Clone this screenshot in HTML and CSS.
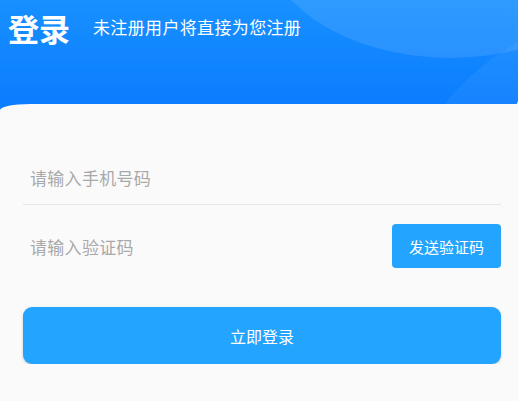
FILE: index.html
```html
<!DOCTYPE html>
<html lang="zh-CN">
<head>
    <meta charset="UTF-8">
    <meta name="viewport" content="width=device-width, initial-scale=1.0">
    <title>登录</title>
    <link rel="stylesheet" href="styles.css">
</head>
<body>
    <div class="header">
        <div class="bubble bubble-top"></div>
        <div class="bubble bubble-bottom"></div>
        <div class="title-row">
            <h1>登录</h1>
            <span class="subtitle">未注册用户将直接为您注册</span>
        </div>
    </div>

    <div class="panel">
        <div class="field field-phone">
            <input type="text" placeholder="请输入手机号码">
        </div>
        <div class="field field-code">
            <input type="text" placeholder="请输入验证码">
            <button class="code-btn">发送验证码</button>
        </div>
        <button class="login-btn">立即登录</button>
    </div>
</body>
</html>
```

FILE: styles.css
```css
body {
    margin: 0;
    background-color: #fafafa;
    font-family: "Noto Sans CJK SC", "Noto Sans", sans-serif;
}
.header {
    position: relative;
    height: 110px;
    overflow: hidden;
    background: linear-gradient(180deg, #1890ff 0%, #0a7cff 100%);
    border-bottom-right-radius: 16px 10px;
}
.bubble {
    position: absolute;
    border-radius: 50%;
}
.bubble-top {
    left: 260px;
    top: -198px;
    width: 380px;
    height: 256px;
    background: rgba(255, 255, 255, 0.1);
}
.bubble-bottom {
    left: 390px;
    top: 10px;
    width: 500px;
    height: 500px;
    background: rgba(255, 255, 255, 0.05);
}
.title-row {
    position: relative;
    display: flex;
    align-items: center;
    padding: 7px 0 0 8px;
}
h1 {
    margin: 0;
    font-size: 31px;
    font-weight: bold;
    color: #fff;
    line-height: 42px;
}
.subtitle {
    margin-left: 23px;
    margin-top: -3px;
    font-size: 17px;
    letter-spacing: 0.35px;
    color: #fff;
}
.panel {
    position: relative;
    margin-top: -6px;
    padding: 46px 17px 0 23px;
    background-color: #fafafa;
    border-top-left-radius: 30px 6px;
}
.field {
    display: flex;
    align-items: center;
}
.field input {
    flex: 1;
    border: none;
    outline: none;
    background: transparent;
    padding: 0 0 0 7px;
    font-family: inherit;
    font-size: 17px;
    letter-spacing: 0.3px;
    color: #333;
}
.field input::placeholder {
    color: #a9a9a9;
}
.field-phone {
    height: 54px;
    border-bottom: 1px solid #e6e6e6;
}
.field-code {
    height: 82px;
}
.code-btn {
    width: 109px;
    height: 44px;
    border: none;
    border-radius: 4px;
    background-color: #22a4ff;
    color: #fff;
    font-family: inherit;
    font-size: 15px;
}
.login-btn {
    display: block;
    width: 100%;
    height: 57px;
    margin-top: 20px;
    border: none;
    border-radius: 9px;
    background-color: #23a4ff;
    color: #fff;
    font-family: inherit;
    font-size: 16px;
    box-shadow: 0 1px 3px rgba(0, 0, 0, 0.2);
}
```
